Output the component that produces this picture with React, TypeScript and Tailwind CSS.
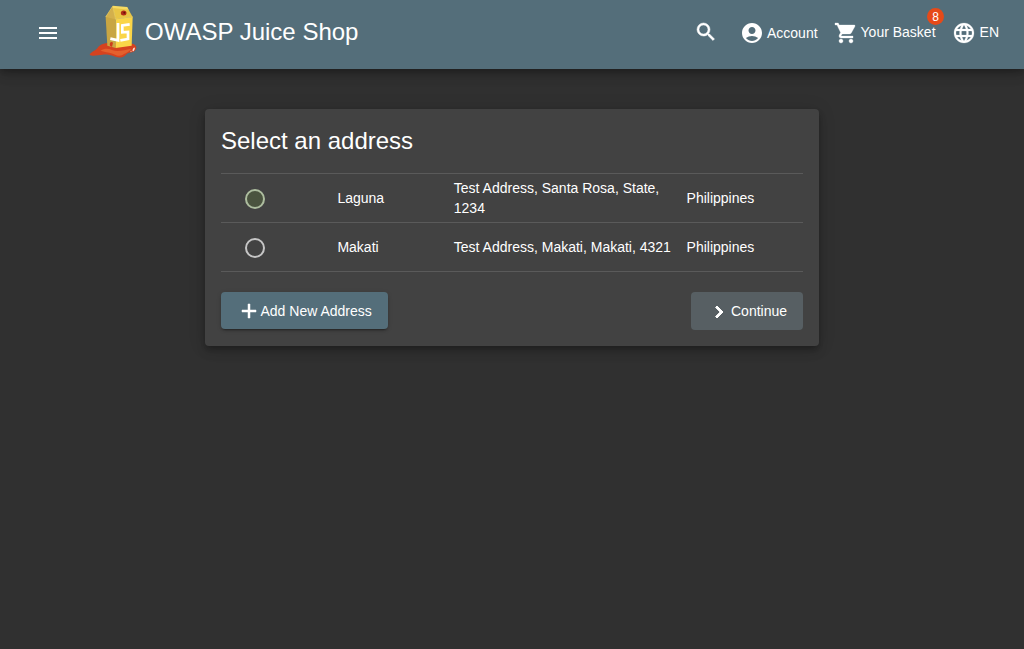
import React from "react";
import {
  MdAccountCircle,
  MdAdd,
  MdLanguage,
  MdMenu,
  MdNavigateNext,
  MdSearch,
  MdShoppingCart,
} from "react-icons/md";

function JuiceLogo() {
  return (
    <svg className="h-[53px] w-12" viewBox="27 15 144 159" aria-hidden="true">
      <path
        d="M29 164C32 156 44 154 52 145C58 133 72 129 88 128L157 131C167 133 171 141 168 148C164 156 154 158 147 158C139 160 138 166 130 170C120 174 110 173 102 169C92 165 80 163 68 164C54 165 37 170 29 164Z"
        fill="#d5421f"
      />
      <path d="M62 152C74 144 84 145 96 150C112 156 132 151 154 146C147 157 132 160 126 166C116 170 108 165 98 161C84 156 72 156 62 152Z" fill="#e4602d" />
      <ellipse cx="161" cy="148" rx="2.6" ry="6" transform="rotate(25 161 148)" fill="#ffe5dc" />
      <circle cx="153" cy="154" r="2" fill="#f7b79f" />
      <path d="M77 51L98 18L107 58L107 144L82 137Z" fill="#c9a643" />
      <path d="M77 51L98 25L106 58Z" fill="#d3b04c" />
      <path d="M107 58L158 51L155 137L107 144Z" fill="#fad548" />
      <path d="M98 20L145 28L158 51L107 58Z" fill="#e8c545" />
      <path d="M98 17L142 21L146 29L99 24Z" fill="#f6da62" />
      <path d="M77 51L98 19L107 58L158 51" fill="none" stroke="#f0d365" strokeWidth="2" />
      <ellipse cx="131" cy="39" rx="8.5" ry="7.5" fill="#b02c18" />
      <circle cx="133" cy="38" r="3" fill="#671008" />
      <path d="M114 69V121L91 116" fill="none" stroke="#fff" strokeWidth="8" />
      <path d="M149 73L127 76V97L144 96V117L121 121" fill="none" stroke="#fff" strokeWidth="8" />
      <path d="M90 137C87 127 94 123 99 128L96 141Z" fill="#cf3b1c" />
    </svg>
  );
}

function Header() {
  return (
    <header className="flex h-[69px] items-start bg-[#546e7a] shadow-[0_3px_5px_-1px_rgba(0,0,0,.2),0_6px_10px_0_rgba(0,0,0,.14),0_1px_18px_0_rgba(0,0,0,.12)]">
      <button className="mt-[21px] ml-9" aria-label="Menu"><MdMenu size={24} /></button>
      <div className="mt-[5px] ml-[29px]"><JuiceLogo /></div>
      <span className="mt-4 ml-2 text-2xl leading-8 whitespace-nowrap">OWASP Juice Shop</span>
      <nav className="mr-[25px] ml-auto flex items-start text-sm leading-6 whitespace-nowrap">
        <button className="mt-5 mr-[22px]" aria-label="Search">
          <MdSearch size={24} className="[&>path:last-child]:stroke-[0.5]" />
        </button>
        <button className="mt-[21px] mr-4 flex items-center gap-[3px]">
          <MdAccountCircle size={24} /><span>Account</span>
        </button>
        <button className="relative mt-[21px] mr-4 flex items-center gap-[3px]">
          <MdShoppingCart size={24} className="[&>path:last-child]:stroke-[0.3]" /><span className="-mt-0.5">Your Basket</span>
          <span className="absolute -top-[13px] -right-[8.5px] flex size-[17px] items-center justify-center rounded-full bg-[#e64a19] text-xs font-normal">8</span>
        </button>
        <button className="mt-[21px] flex items-center gap-1">
          <MdLanguage size={24} className="[&>path:last-child]:stroke-[0.2]" /><span className="-mt-0.5">EN</span>
        </button>
      </nav>
    </header>
  );
}

interface Address {
  name: string;
  street: string;
  country: string;
  focused: boolean;
}

const addresses: Address[] = [
  { name: "Laguna", street: "Test Address, Santa Rosa, State, 1234", country: "Philippines", focused: true },
  { name: "Makati", street: "Test Address, Makati, Makati, 4321", country: "Philippines", focused: false },
];

function AddressRow({ address }: { address: Address }) {
  return (
    <div role="row" className="grid h-[49px] grid-cols-[1fr_1fr_2fr_1fr] items-center border-b border-[#5a5a5a] text-sm leading-5">
      <div className="pt-px pl-6">
        <button
          role="radio"
          aria-checked={false}
          aria-label={address.name}
          className={`block size-5 rounded-full border-2 ${address.focused ? "border-[#adbd9f] bg-[#4a533f]" : "border-[#c6c6c6]"}`}
        />
      </div>
      <span>{address.name}</span>
      <span className="pr-3">{address.street}</span>
      <span>{address.country}</span>
    </div>
  );
}

export default function App() {
  return (
    <div className="min-h-screen bg-[#303030] font-['Liberation_Sans',Arial,sans-serif] text-white">
      <Header />
      <main className="mx-auto mt-10 h-[237px] w-[614px] rounded-[4px] bg-[#424242] px-4 pt-4 shadow-[0_3px_5px_-1px_rgba(0,0,0,.2),0_6px_10px_0_rgba(0,0,0,.14),0_1px_18px_0_rgba(0,0,0,.12)]">
        <h1 className="h-12 text-2xl leading-8">Select an address</h1>
        <div role="table" className="border-t border-[#5a5a5a]">
          {addresses.map((address) => <AddressRow key={address.name} address={address} />)}
        </div>
        <div className="mt-5 flex items-start justify-between text-sm font-normal">
          <button className="flex h-[37px] w-[167px] items-center rounded-[4px] bg-[#546e7a] pl-[15.5px] whitespace-nowrap shadow-[0_3px_1px_-2px_rgba(0,0,0,.2),0_2px_2px_0_rgba(0,0,0,.14),0_1px_5px_0_rgba(0,0,0,.12)]">
            <MdAdd size={24} className="[&>path:last-child]:stroke-[0.5]" /><span>Add New Address</span>
          </button>
          <button className="flex h-[38px] w-28 items-center rounded-[4px] bg-[#575f63] pl-4 whitespace-nowrap">
            <MdNavigateNext size={24} className="translate-y-px [&>path:last-child]:stroke-1" /><span>Continue</span>
          </button>
        </div>
      </main>
    </div>
  );
}
